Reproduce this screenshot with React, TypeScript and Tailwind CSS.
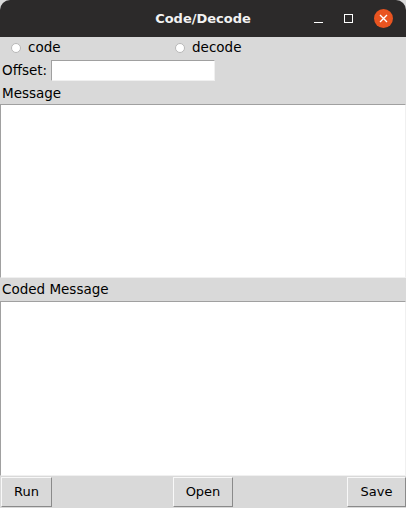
export default function App() {
  return (
    <div className="flex h-[508px] w-[406px] flex-col overflow-hidden bg-[#d9d9d9] font-['DejaVu_Sans',sans-serif] text-[13px] text-black">
      {/* title bar */}
      <div className="relative flex h-[37px] shrink-0 items-center justify-center rounded-t-[10px] bg-[#2c2a2a]">
        <span className="text-[13px] font-bold text-[#f2f2f2]">Code/Decode</span>
        <div className="absolute right-[13px] top-[9px] flex items-center gap-[21px]">
          <div className="mt-[8px] h-[1.5px] w-[9px] bg-white" />
          <div className="h-[9px] w-[9px] border border-white" />
          <div className="flex h-[19px] w-[19px] items-center justify-center rounded-full bg-[#e95420]">
            <svg width="9" height="9" viewBox="0 0 9 9">
              <path d="M1 1L8 8M8 1L1 8" stroke="white" strokeWidth="1.4" />
            </svg>
          </div>
        </div>
      </div>

      {/* radio row */}
      <div className="flex h-[22px] items-center text-[13.5px]">
        <label className="ml-[11px] flex w-[164px] items-center gap-[7px]">
          <span className="h-[10px] w-[10px] rounded-full border border-[#b8b8b8] bg-white" />
          <span className="leading-none">code</span>
        </label>
        <label className="flex items-center gap-[7px]">
          <span className="h-[10px] w-[10px] rounded-full border border-[#b8b8b8] bg-white" />
          <span className="leading-none">decode</span>
        </label>
      </div>

      {/* offset row */}
      <div className="flex h-[23px] items-center gap-[4px] pl-[2px] text-[13.5px]">
        <span>Offset:</span>
        <div className="h-[21px] w-[164px] border border-[#a0a0a0] border-b-[#f0f0f0] border-r-[#f0f0f0] bg-white" />
      </div>

      <div className="flex h-[22px] items-center pl-[2px] text-[13.5px]">Message</div>
      <div className="h-[174px] shrink-0 border border-[#a0a0a0] border-b-[#f0f0f0] border-r-[#f0f0f0] bg-white" />

      <div className="flex h-[23px] items-center pl-[2px] text-[13.5px]">Coded Message</div>
      <div className="h-[175px] shrink-0 border border-[#a0a0a0] border-b-[#f0f0f0] border-r-[#f0f0f0] bg-white" />

      {/* buttons */}
      <div className="flex flex-1 items-start pl-[1px] pt-[1px]">
        <button className="h-[30px] w-[51px] border border-[#f8f8f8] border-b-[#8a8a8a] border-r-[#8a8a8a] bg-[#d9d9d9]">
          Run
        </button>
        <button className="ml-[121px] h-[30px] w-[60px] border border-[#f8f8f8] border-b-[#8a8a8a] border-r-[#8a8a8a] bg-[#d9d9d9]">
          Open
        </button>
        <button className="ml-auto h-[30px] w-[59px] border border-[#f8f8f8] border-b-[#8a8a8a] border-r-[#8a8a8a] bg-[#d9d9d9]">
          Save
        </button>
      </div>
    </div>
  );
}
